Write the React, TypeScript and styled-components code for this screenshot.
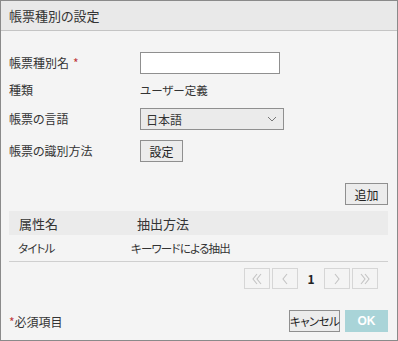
import React from 'react'
import styled, { createGlobalStyle } from 'styled-components'

const Global = createGlobalStyle`
    html, body { margin: 0; padding: 0; background: #ffffff; }
    body {
        font-family: 'Noto Sans CJK JP', 'Noto Sans', sans-serif;
        font-size: 12px;
        color: #333333;
        font-feature-settings: "palt";
    }
`

const Dialog = styled.div`
    width: 398px;
    height: 341px;
    box-sizing: border-box;
    border: 1px solid #8a8a8a;
    background: #f4f4f4;
    display: flex;
    flex-direction: column;
`

const Header = styled.div`
    height: 29px;
    flex: none;
    background: #e9e9e9;
    border-bottom: 1px solid #c4c4c4;
    display: flex;
    align-items: center;
    padding-left: 8px;
    font-size: 13px;
    color: #333;
`

const Body = styled.div`
    flex: 1;
    display: flex;
    flex-direction: column;
    padding: 21px 9px 8px 8px;
`

const FormRow = styled.div<{ $h: number }>`
    display: flex;
    align-items: flex-start;
    height: ${p => p.$h}px;
    flex: none;
`

const Label = styled.div`
    width: 131px;
    height: 22px;
    line-height: 22px;
    flex: none;
`

const Value = styled.div`
    height: 22px;
    line-height: 22px;
    font-size: 11.5px;
`

const Required = styled.span`
    color: #c0393b;
    margin-left: 4px;
`

const TextInput = styled.input`
    width: 140px;
    height: 22px;
    box-sizing: border-box;
    border: 1px solid #8f8f8f;
    background: #ffffff;
    margin: 0;
    padding: 0 4px;
    outline: none;
`

const Select = styled.div`
    width: 144px;
    height: 22px;
    box-sizing: border-box;
    border: 1px solid #8f8f8f;
    background: #ebebeb;
    display: flex;
    align-items: center;
    justify-content: space-between;
    padding: 0 6px 0 5px;
`

const Button = styled.button<{ $w: number }>`
    width: ${p => p.$w}px;
    height: 22px;
    box-sizing: border-box;
    border: 1px solid #8f8f8f;
    background: #ececec;
    color: #222;
    font-family: inherit;
    font-size: 12px;
    font-feature-settings: "palt";
    white-space: nowrap;
    padding: 0;
    margin: 0;
    cursor: pointer;
`

const CancelButton = styled(Button)`
    font-size: 11.5px;
    letter-spacing: -0.6px;
`

const PrimaryButton = styled(Button)`
    border: 1px solid #a9d4d8;
    background: #a9d4d8;
    color: #ffffff;
    font-family: 'Liberation Sans', sans-serif;
    font-weight: bold;
`

const AddBar = styled.div`
    display: flex;
    justify-content: flex-end;
    margin-top: 21px;
    margin-bottom: 6px;
`

const Table = styled.div`
    display: flex;
    flex-direction: column;
`

const TableHead = styled.div`
    display: flex;
    height: 24px;
    align-items: center;
    background: #ebebeb;
    font-size: 13px;
`

const TableRow = styled.div`
    display: flex;
    height: 26px;
    align-items: center;
    border-bottom: 1px solid #cfcfcf;
    font-size: 11.5px;
    letter-spacing: -0.8px;
`

const Cell = styled.div<{ $w?: number; $pl: number }>`
    width: ${p => (p.$w ? `${p.$w}px` : 'auto')};
    padding-left: ${p => p.$pl}px;
    flex: ${p => (p.$w ? 'none' : '1')};
    box-sizing: border-box;
`

const Pager = styled.div`
    display: flex;
    justify-content: flex-end;
    align-items: center;
    gap: 2px;
    margin-top: 6px;
    padding-right: 10px;
`

const PageButton = styled.div`
    width: 26px;
    height: 21px;
    box-sizing: border-box;
    border: 1px solid #d6d6d6;
    display: flex;
    align-items: center;
    justify-content: center;
`

const PageNumber = styled.div`
    width: 22px;
    text-align: center;
    font-weight: bold;
    color: #222;
`

const Footer = styled.div`
    margin-top: auto;
    display: flex;
    align-items: center;
    justify-content: space-between;
`

const Note = styled.div`
    display: flex;
    align-items: center;
`

const NoteStar = styled.span`
    color: #c0393b;
`

const Actions = styled.div`
    display: flex;
    gap: 5px;
`

const Chevron = ({ dir, double }: { dir: 'l' | 'r'; double?: boolean }) => {
    const one = dir === 'l' ? 'M6 1 L2 6 L6 11' : 'M2 1 L6 6 L2 11'
    const two = dir === 'l' ? 'M10 1 L6 6 L10 11' : 'M6 1 L10 6 L6 11'
    return (
        <svg width={double ? 12 : 8} height="12" viewBox={double ? '0 0 12 12' : '0 0 8 12'}>
            <path d={one} fill="none" stroke="#c4c4c4" strokeWidth="1.1" />
            {double && <path d={two} fill="none" stroke="#c4c4c4" strokeWidth="1.1" />}
        </svg>
    )
}

export default function App() {
    return (
        <>
            <Global />
            <Dialog>
                <Header>帳票種別の設定</Header>
                <Body>
                    <FormRow $h={27}>
                        <Label>帳票種別名<Required>*</Required></Label>
                        <TextInput />
                    </FormRow>
                    <FormRow $h={29}>
                        <Label>種類</Label>
                        <Value>ユーザー定義</Value>
                    </FormRow>
                    <FormRow $h={32}>
                        <Label>帳票の言語</Label>
                        <Select>
                            <span>日本語</span>
                            <svg width="10" height="6" viewBox="0 0 10 6">
                                <path d="M1 1 L5 5 L9 1" fill="none" stroke="#777" strokeWidth="1" />
                            </svg>
                        </Select>
                    </FormRow>
                    <FormRow $h={22}>
                        <Label>帳票の識別方法</Label>
                        <Button $w={43}>設定</Button>
                    </FormRow>

                    <AddBar>
                        <Button $w={43}>追加</Button>
                    </AddBar>

                    <Table>
                        <TableHead>
                            <Cell $w={118} $pl={10}>属性名</Cell>
                            <Cell $pl={10}>抽出方法</Cell>
                        </TableHead>
                        <TableRow>
                            <Cell $w={122} $pl={9}>タイトル</Cell>
                            <Cell $pl={0}>キーワードによる抽出</Cell>
                        </TableRow>
                    </Table>

                    <Pager>
                        <PageButton><Chevron dir="l" double /></PageButton>
                        <PageButton><Chevron dir="l" /></PageButton>
                        <PageNumber>1</PageNumber>
                        <PageButton><Chevron dir="r" /></PageButton>
                        <PageButton><Chevron dir="r" double /></PageButton>
                    </Pager>

                    <Footer>
                        <Note><NoteStar>*</NoteStar>必須項目</Note>
                        <Actions>
                            <CancelButton $w={51}>キャンセル</CancelButton>
                            <PrimaryButton $w={43}>OK</PrimaryButton>
                        </Actions>
                    </Footer>
                </Body>
            </Dialog>
        </>
    )
}
